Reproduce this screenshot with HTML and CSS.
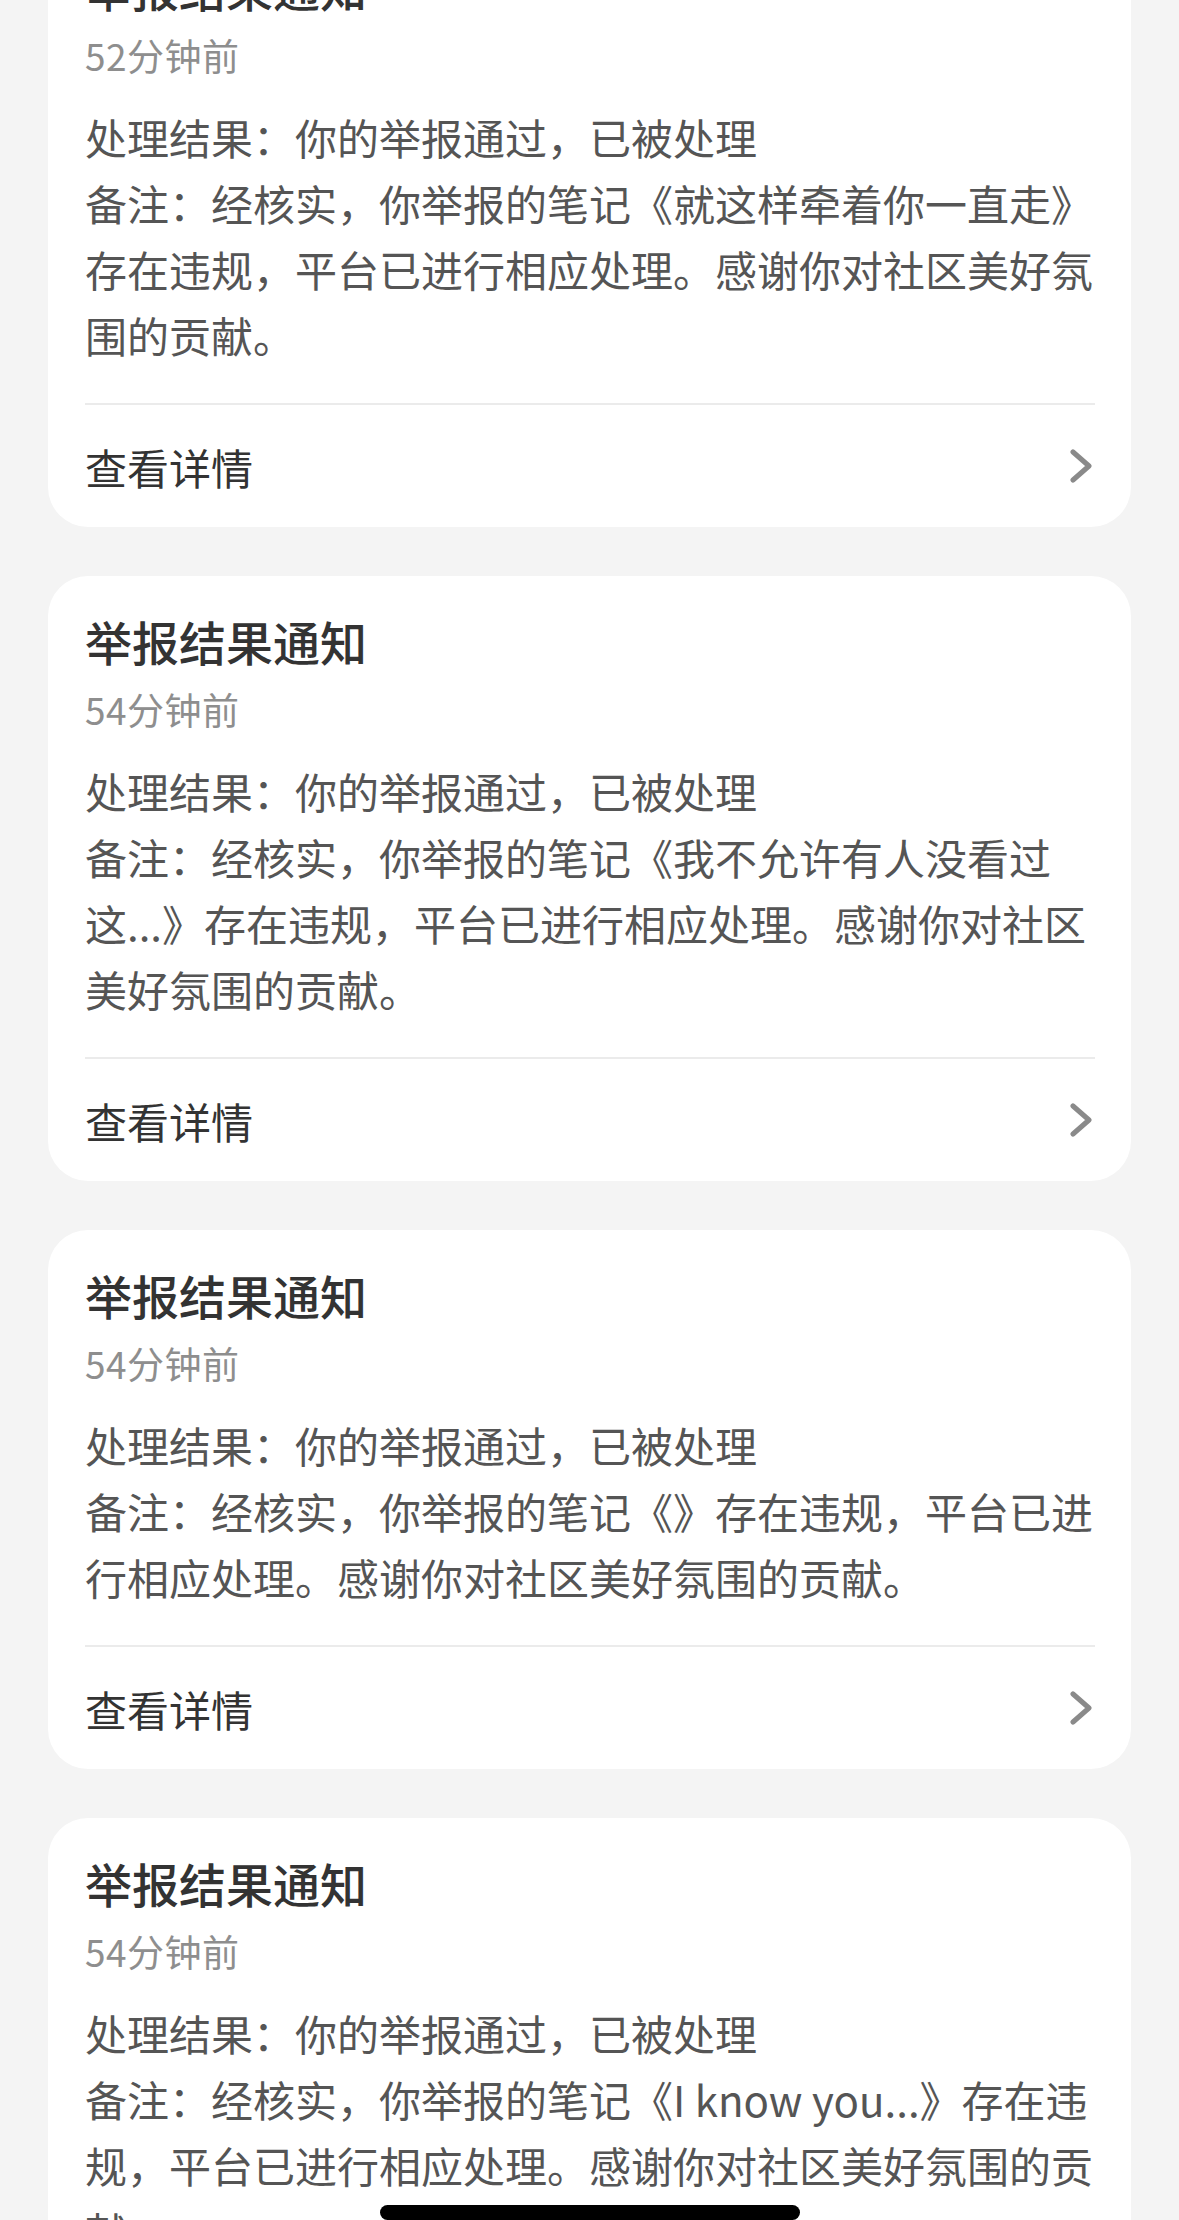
FILE: index.html
```html
<!DOCTYPE html>
<html lang="zh-CN">
<head>
<meta charset="utf-8">
<title>举报结果通知</title>
<link rel="stylesheet" href="styles.css">
</head>
<body>
<div class="list">
  <div class="card">
    <div class="title">举报结果通知</div>
    <div class="time">52分钟前</div>
    <div class="body">
      <p>处理结果：你的举报通过，已被处理</p>
      <p>备注：经核实，你举报的笔记《就这样牵着你一直走》存在违规，平台已进行相应处理。感谢你对社区美好氛围的贡献。</p>
    </div>
    <div class="divider"></div>
    <div class="footer"><span>查看详情</span><svg class="chev" viewBox="0 0 22 34" width="22" height="34"><polyline points="3,3 19,17 3,31" fill="none" stroke="#8a8a8a" stroke-width="5" stroke-linecap="round" stroke-linejoin="round"/></svg></div>
  </div>

  <div class="card">
    <div class="title">举报结果通知</div>
    <div class="time">54分钟前</div>
    <div class="body">
      <p>处理结果：你的举报通过，已被处理</p>
      <p>备注：经核实，你举报的笔记《我不允许有人没看过这...》存在违规，平台已进行相应处理。感谢你对社区美好氛围的贡献。</p>
    </div>
    <div class="divider"></div>
    <div class="footer"><span>查看详情</span><svg class="chev" viewBox="0 0 22 34" width="22" height="34"><polyline points="3,3 19,17 3,31" fill="none" stroke="#8a8a8a" stroke-width="5" stroke-linecap="round" stroke-linejoin="round"/></svg></div>
  </div>

  <div class="card">
    <div class="title">举报结果通知</div>
    <div class="time">54分钟前</div>
    <div class="body">
      <p>处理结果：你的举报通过，已被处理</p>
      <p>备注：经核实，你举报的笔记《》存在违规，平台已进行相应处理。感谢你对社区美好氛围的贡献。</p>
    </div>
    <div class="divider"></div>
    <div class="footer"><span>查看详情</span><svg class="chev" viewBox="0 0 22 34" width="22" height="34"><polyline points="3,3 19,17 3,31" fill="none" stroke="#8a8a8a" stroke-width="5" stroke-linecap="round" stroke-linejoin="round"/></svg></div>
  </div>

  <div class="card">
    <div class="title">举报结果通知</div>
    <div class="time">54分钟前</div>
    <div class="body">
      <p>处理结果：你的举报通过，已被处理</p>
      <p>备注：经核实，你举报的笔记《I know you...》存在违规，平台已进行相应处理。感谢你对社区美好氛围的贡献。</p>
    </div>
    <div class="divider"></div>
    <div class="footer"><span>查看详情</span><svg class="chev" viewBox="0 0 22 34" width="22" height="34"><polyline points="3,3 19,17 3,31" fill="none" stroke="#8a8a8a" stroke-width="5" stroke-linecap="round" stroke-linejoin="round"/></svg></div>
  </div>
</div>
<div class="home-indicator"></div>
</body>
</html>
```

FILE: styles.css
```css
html, body {
  margin: 0;
  padding: 0;
  background: #f4f4f4;
}
body {
  font-family: "Noto Sans CJK SC", "Noto Sans", sans-serif;
  height: 2220px;
  overflow: hidden;
  text-spacing-trim: space-all;
}
.list {
  display: flex;
  flex-direction: column;
  gap: 49px;
  margin-top: -78px;
  padding: 0 48px 0 48px;
}
.card {
  background: #ffffff;
  border-radius: 40px;
  padding: 36px 36px 0 37px;
}
.title {
  font-size: 47px;
  line-height: 58px;
  font-weight: 500;
  color: #333333;
}
.time {
  margin-top: 13px;
  font-size: 37px;
  line-height: 52px;
  letter-spacing: 0.5px;
  color: #8e8e8e;
}
.body {
  margin-top: 23px;
  font-size: 42px;
  line-height: 66px;
  color: #555555;
}
.body p {
  margin: 0;
}
.divider {
  margin-top: 35px;
  height: 2px;
  background: #ebebeb;
}
.footer {
  height: 122px;
  display: flex;
  align-items: center;
  justify-content: space-between;
  font-size: 42px;
  color: #333333;
}
.chev {
  margin-right: 3px;
  display: block;
}
.home-indicator {
  position: fixed;
  left: 380px;
  width: 420px;
  bottom: 0;
  height: 15px;
  border-radius: 8px;
  background: #000000;
}
```
